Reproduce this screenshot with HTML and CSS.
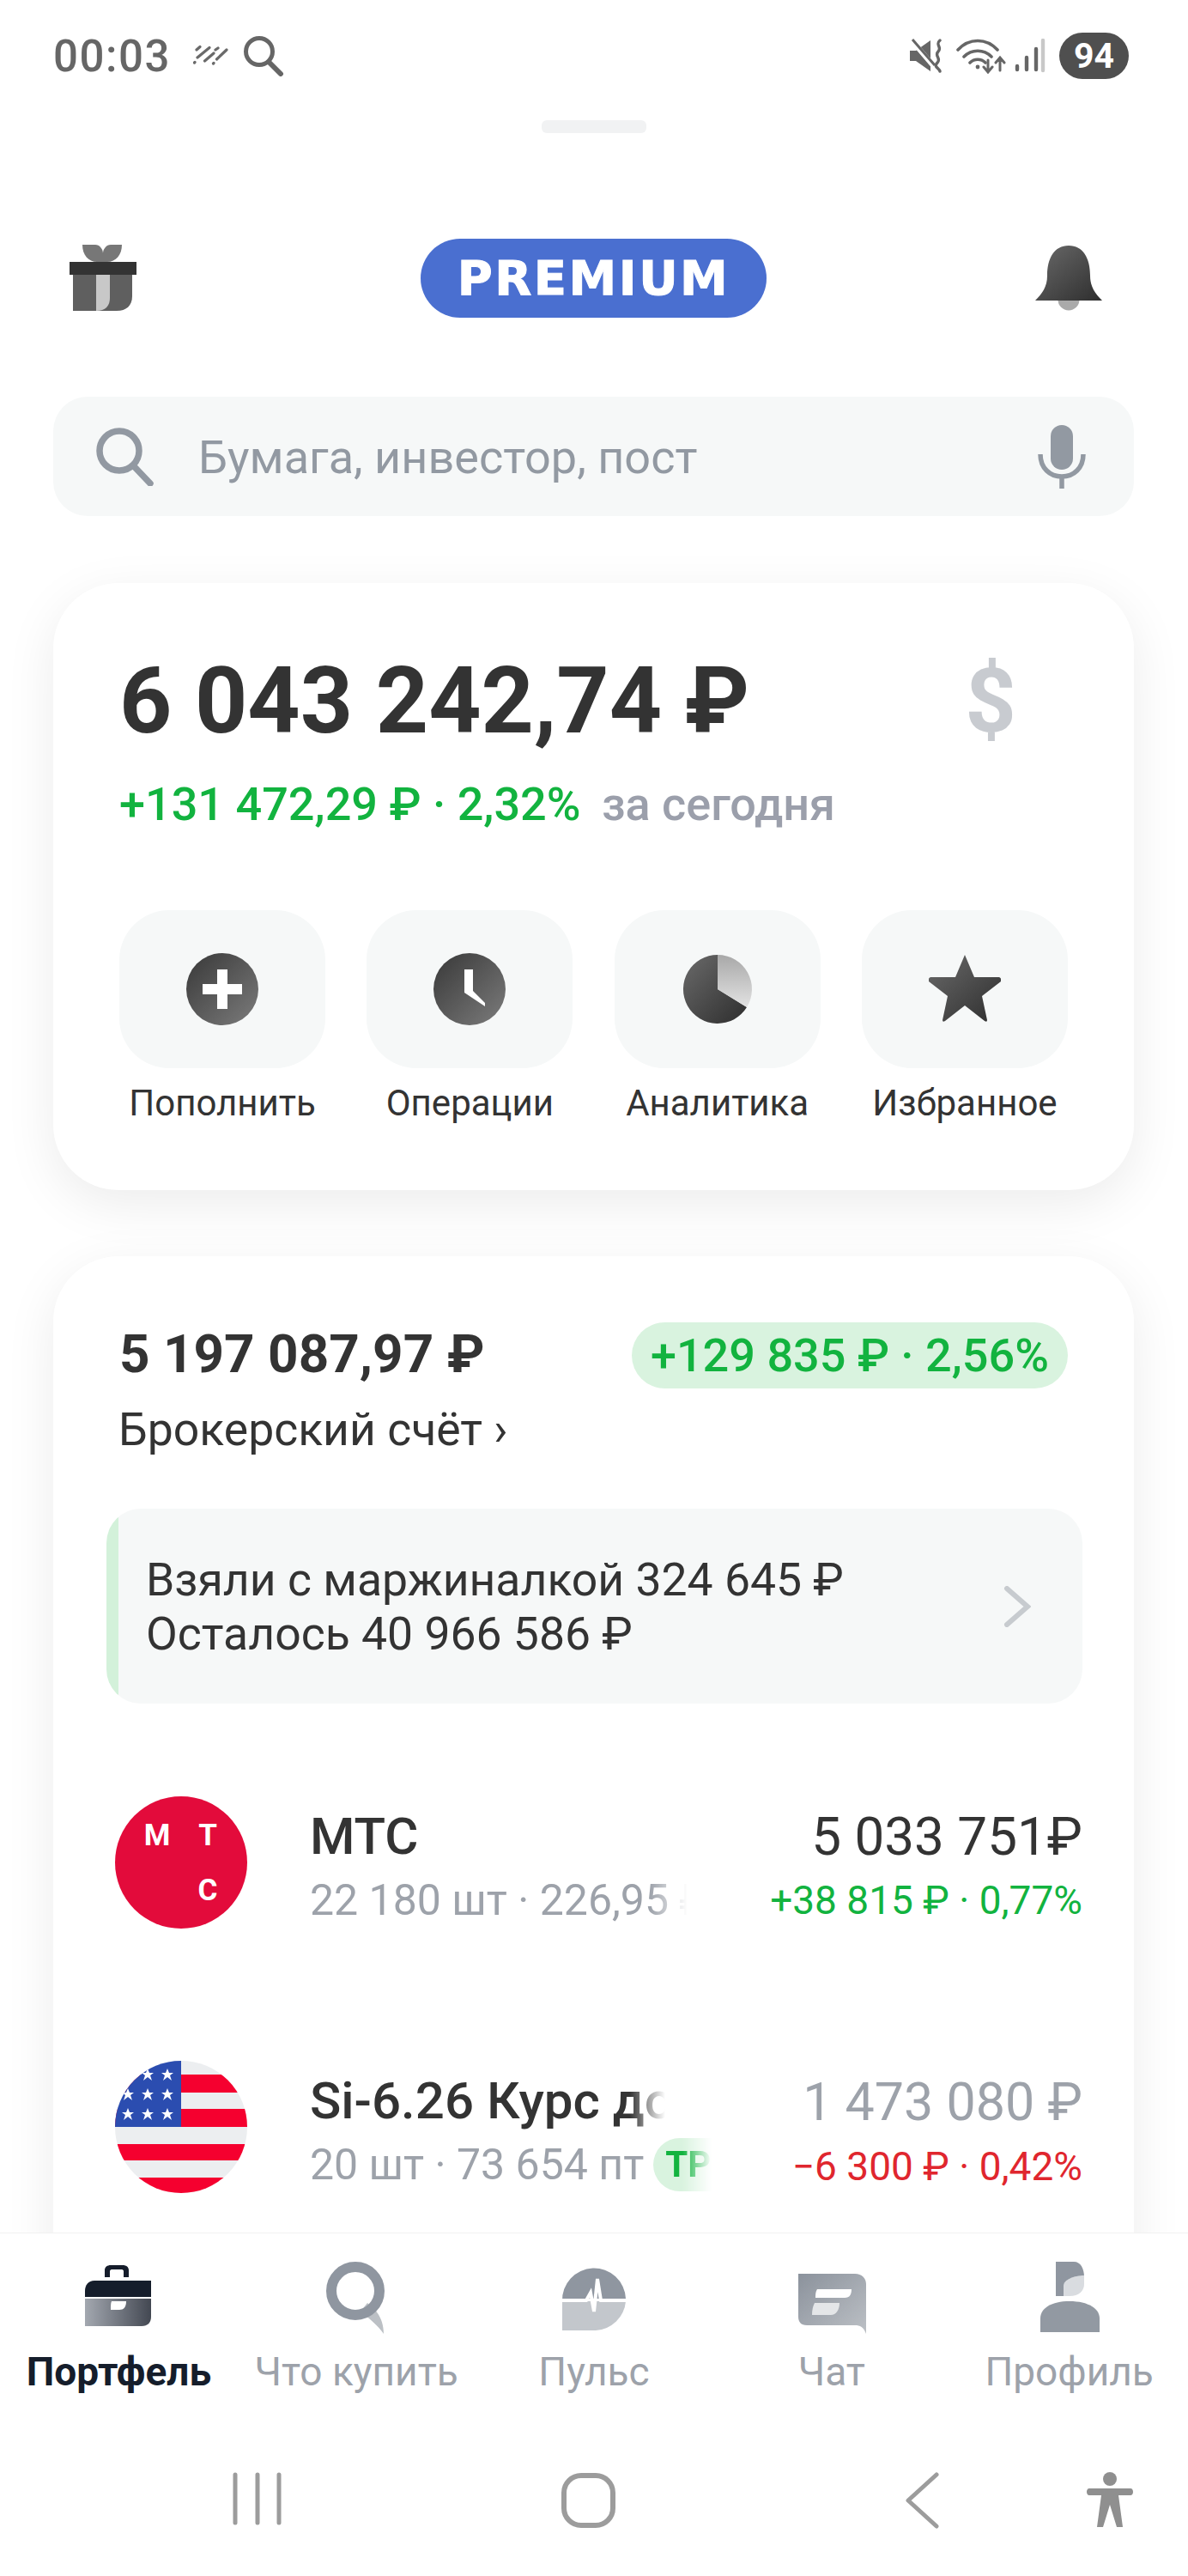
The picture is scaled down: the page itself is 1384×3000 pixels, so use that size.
FILE: index.html
```html
<!DOCTYPE html>
<html lang="ru">
<head>
    <meta charset="UTF-8">
    <meta name="viewport" content="width=device-width, initial-scale=1.0">
    <title>Портфель</title>
    <link rel="stylesheet" href="styles.css">
</head>
<body>
<svg class="defs" width="0" height="0">
    <defs>
        <linearGradient id="dark" x1="0" y1="0" x2="1" y2="1">
            <stop offset="0" stop-color="#383838"/>
            <stop offset="1" stop-color="#7c7c7c"/>
        </linearGradient>
        <linearGradient id="darkRev" x1="0" y1="0" x2="1" y2="1">
            <stop offset="0" stop-color="#6a6a6a"/>
            <stop offset="1" stop-color="#2e2e2e"/>
        </linearGradient>
        <linearGradient id="lightPie" x1="0" y1="0" x2="0" y2="1">
            <stop offset="0" stop-color="#a8a8a8"/>
            <stop offset="1" stop-color="#e2e2e2"/>
        </linearGradient>
        <linearGradient id="case" x1="0" y1="0" x2="1" y2="0">
            <stop offset="0" stop-color="#a3a8b0"/>
            <stop offset="1" stop-color="#434852"/>
        </linearGradient>
        <linearGradient id="chat" x1="0" y1="0" x2="1" y2="1">
            <stop offset="0" stop-color="#8b929c"/>
            <stop offset="1" stop-color="#bcc0c5"/>
        </linearGradient>
    </defs>
</svg>
<div class="screen">
    <div class="status">
        <div class="status-left">
            <span class="time">00:03</span>
            <svg class="ic-rain" width="42" height="26" viewBox="0 0 42 26" fill="none" stroke="#6a6a6a" stroke-width="3.2" stroke-linecap="round">
                <path d="M4 6l4-3.500M5 15L19 3.500M1.500 21l.5-.5M13.500 19L24 10M26 6l3-2M23.500 22l.5-.5M27.500 17L39 6"/>
            </svg>
            <svg width="48" height="48" viewBox="0 0 48 48" fill="none" stroke="#666" stroke-linecap="round">
                <circle cx="19" cy="19" r="15.500" stroke-width="5"/>
                <path d="M30 31l14 14" stroke-width="6"/>
            </svg>
        </div>
        <div class="status-right">
            <svg class="ic-mute" width="40" height="40" viewBox="0 0 40 40" fill="none">
                <path d="M0 14h7L24 2v36L7 26H0z" fill="#666"/>
                <path d="M2 2l24 28" stroke="#fff" stroke-width="6"/>
                <path d="M3 1l26 30" stroke="#666" stroke-width="3"/>
                <path d="M35 2c-6 5 3 8-2 13s4 8-1 13 2 6 3 10" stroke="#666" stroke-width="3.400" stroke-linecap="round"/>
            </svg>
            <svg class="ic-wifi" width="58" height="42" viewBox="0 0 58 42" fill="none" stroke="#666" stroke-width="3.600" stroke-linecap="round">
                <path d="M2 14c13-14 33-14 46 0M9 22c9-9 23-9 32 0M16 29c5-5 13-5 18 0"/>
                <circle cx="25" cy="34" r="2.400" fill="#666" stroke="none"/>
                <path d="M37 26v13m-5-5l5 6 5-6M51 38V24m-5 5l5-6 5 6" stroke-width="3"/>
            </svg>
            <svg class="ic-signal" width="36" height="40" viewBox="0 0 36 40" fill="none" stroke="#666" stroke-width="4.400" stroke-linecap="round">
                <path d="M3 36v-4M14 36V22M25 36V12"/>
                <path d="M33 37V2" stroke="#c8c8c8"/>
            </svg>
            <span class="battery">94</span>
        </div>
    </div>

    <div class="handle"></div>

    <div class="topbar">
        <svg class="gift" width="78" height="78" viewBox="0 0 78 78">
            <path d="M15 0H30C35 0 39 5 39 10C39 5 43 0 48 0H61C61 12 54 20 44 20H32C22 20 15 12 15 0Z" fill="#777"/>
            <path d="M4 35H73V60C73 71 66 77 55 77H4Z" fill="#5f5f5f"/>
            <path d="M31 35H47V62C47 71 42 77 31 77Z" fill="#c8c8c8"/>
            <rect y="20" width="78" height="15" fill="#333"/>
        </svg>
        <div class="premium">PREMIUM</div>
        <svg class="bell" width="78" height="76" viewBox="0 0 78 76">
            <circle cx="39" cy="63" r="12.500" fill="#aaa"/>
            <path d="M39 0C22 0 14 15 14 35C14 48 8 56 0 64H78C70 56 64 48 64 35C64 15 56 0 39 0Z" fill="url(#darkRev)"/>
        </svg>
    </div>

    <div class="search">
        <svg class="search-icon" width="68" height="68" viewBox="0 0 68 68" fill="none" stroke="#9299a2" stroke-width="7.500" stroke-linecap="round">
            <circle cx="28" cy="27" r="23"/>
            <path d="M45 45l19 20"/>
        </svg>
        <span class="search-text">Бумага, инвестор, пост</span>
        <svg class="mic" width="56" height="74" viewBox="0 0 56 74" fill="none" stroke="#9299a2">
            <rect x="15" y="0" width="26" height="52" rx="13" fill="#9299a2" stroke="none"/>
            <path d="M3 34c0 16 11 26 25 26s25-10 25-26" stroke-width="5.500"/>
            <path d="M28 60v14" stroke-width="5.500"/>
        </svg>
    </div>

    <main class="content">
        <section class="card card-total">
            <div class="total-row">
                <span class="total-value">6 043 242,74 ₽</span>
                <span class="currency">$</span>
            </div>
            <div class="today">
                <span class="green">+131 472,29 ₽ · 2,32%</span>
                <span class="today-label">за сегодня</span>
            </div>
            <div class="actions">
                <div class="action">
                    <div class="action-btn">
                        <svg width="84" height="84" viewBox="0 0 84 84">
                            <circle cx="42" cy="42" r="42" fill="url(#dark)"/>
                            <path d="M36 19h12v17h17v12H48v17H36V48H19V36h17z" fill="#fff"/>
                        </svg>
                    </div>
                    <span class="action-label">Пополнить</span>
                </div>
                <div class="action">
                    <div class="action-btn">
                        <svg width="84" height="84" viewBox="0 0 84 84">
                            <circle cx="42" cy="42" r="42" fill="url(#dark)"/>
                            <path d="M36 19h10v25l14 14v4L36 46z" fill="#fff"/>
                        </svg>
                    </div>
                    <span class="action-label">Операции</span>
                </div>
                <div class="action">
                    <div class="action-btn">
                        <svg width="84" height="84" viewBox="0 0 84 84">
                            <path d="M42 2a40 40 0 1 0 34 61L42 42z" fill="url(#darkRev)"/>
                            <path d="M42 2a40 40 0 0 1 34 61L42 42z" fill="url(#lightPie)"/>
                        </svg>
                    </div>
                    <span class="action-label">Аналитика</span>
                </div>
                <div class="action">
                    <div class="action-btn">
                        <svg width="84" height="84" viewBox="0 0 84 84">
                            <path d="M42 2L53 28H82Q85 29 84 33L62 50 68 78Q68 81 65 79L42 61 19 79Q16 81 16 78L22 50 0 33Q-1 29 2 28H31Z" fill="url(#darkRev)"/>
                        </svg>
                    </div>
                    <span class="action-label">Избранное</span>
                </div>
            </div>
        </section>

        <section class="card card-account">
            <div class="account-head">
                <span class="account-value">5 197 087,97 ₽</span>
                <span class="account-pill">+129 835 ₽ · 2,56%</span>
            </div>
            <div class="account-name">Брокерский счёт ›</div>

            <div class="margin-box">
                <div class="margin-text">
                    <div>Взяли с маржиналкой 324 645 ₽</div>
                    <div>Осталось 40 966 586 ₽</div>
                </div>
                <svg width="32" height="48" viewBox="0 0 32 48" fill="none" stroke="#c7cbcf" stroke-width="6" stroke-linecap="round">
                    <path d="M4 3l24 21L4 45"/>
                </svg>
            </div>

            <div class="position">
                <svg class="logo" width="154" height="154" viewBox="0 0 154 154">
                    <circle cx="77" cy="77" r="77" fill="#e30b3b"/>
                    <text class="logo-text" x="49" y="57" text-anchor="middle">М</text>
                    <text class="logo-text" x="108" y="57" text-anchor="middle">Т</text>
                    <text class="logo-text" x="108" y="121" text-anchor="middle">С</text>
                </svg>
                <div class="pos-info">
                    <div class="pos-name">МТС</div>
                    <div class="pos-sub fade">22 180 шт · 226,95 ₽</div>
                </div>
                <div class="pos-right">
                    <div class="pos-sum">5 033 751₽</div>
                    <div class="pos-change green">+38 815 ₽ · 0,77%</div>
                </div>
            </div>

            <div class="position">
                <svg class="logo" width="154" height="154" viewBox="0 0 154 154">
                    <clipPath id="flagClip"><circle cx="77" cy="77" r="77"/></clipPath>
                    <g clip-path="url(#flagClip)">
                        <rect width="154" height="154" fill="#eceef0"/>
                        <path d="M0 16h154v21H0zM0 56h154v21H0zM0 97h154v19H0zM0 136h154v18H0z" fill="#f5002f"/>
                        <rect width="77" height="77" fill="#2b4db0"/>
                        <g fill="#fff">
                            <path id="flagStar" d="M38 9l2 5h5l-4 3 2 6-5-4-5 4 2-6-4-3h5z"/>
                            <use href="#flagStar" x="23"/>
                            <use href="#flagStar" x="-23" y="23"/>
                            <use href="#flagStar" y="23"/>
                            <use href="#flagStar" x="23" y="23"/>
                            <use href="#flagStar" x="-23" y="46"/>
                            <use href="#flagStar" y="46"/>
                            <use href="#flagStar" x="23" y="46"/>
                        </g>
                    </g>
                </svg>
                <div class="pos-info">
                    <div class="pos-name fade-name">Si-6.26 Курс доллара</div>
                    <div class="pos-sub pos-sub-tag">
                        <span>20 шт · 73 654 пт</span>
                        <span class="tag"><span class="tag-inner">TP</span></span>
                    </div>
                </div>
                <div class="pos-right">
                    <div class="pos-sum grey">1 473 080 ₽</div>
                    <div class="pos-change red">−6 300 ₽ · 0,42%</div>
                </div>
            </div>
        </section>
    </main>

    <div class="bottom">
        <nav class="tabs">
            <div class="tab active">
                <svg width="90" height="90" viewBox="0 0 90 90">
                    <path d="M29 22V14C29 10 32 8 36 8H50C54 8 57 10 57 14V22H51V15C51 14 50 13 49 13H37C36 13 35 14 35 15V22Z" fill="#151d2b"/>
                    <path d="M7 45V38C7 31 11 26 18 26H84V45Z" fill="#151d2b" transform="translate(-1 0)"/>
                    <path d="M6 47H83V68C83 75 79 79 72 79H6Z" fill="url(#case)"/>
                    <path d="M37 50H54C54 57 51 60 46 60H36C36 55 36 52 37 50Z" fill="#fff"/>
                </svg>
                <span>Портфель</span>
            </div>
            <div class="tab">
                <svg width="90" height="90" viewBox="0 0 90 90" fill="none">
                    <path d="M58 52C66 58 77 68 77 88C70 78 60 70 50 62Z" fill="#bcc0c5"/>
                    <circle cx="44" cy="38" r="28" stroke="#8f96a0" stroke-width="12"/>
                </svg>
                <span>Что купить</span>
            </div>
            <div class="tab">
                <svg width="90" height="90" viewBox="0 0 90 90">
                    <path d="M8 50A37 37 0 0 1 82 47H8Z" fill="#8f96a0"/>
                    <path d="M8 50H82A37 37 0 0 1 47 84H8Z" fill="#c3c7cc"/>
                    <path d="M5 49H36L41 40 45 62 49 24 53 49H85" fill="none" stroke="#fff" stroke-width="4"/>
                </svg>
                <span>Пульс</span>
            </div>
            <div class="tab">
                <svg width="90" height="90" viewBox="0 0 90 90">
                    <path d="M6 18H72C80 18 85 23 85 30V88C82 80 78 78 72 78H16C9 78 6 74 6 68Z" fill="url(#chat)"/>
                    <path d="M28 36H68C68 42 66 46 60 46H26C26 42 26 39 28 36Z" fill="#fff"/>
                    <path d="M25 52H54C54 60 50 66 44 66H22C22 60 23 56 25 52Z" fill="#e4e6e8"/>
                </svg>
                <span>Чат</span>
            </div>
            <div class="tab">
                <svg width="90" height="90" viewBox="0 0 90 90">
                    <path d="M29 4H50C58 4 62 12 62 22C50 22 44 28 44 44H29Z" fill="#8f96a0"/>
                    <path d="M62 20V30C62 38 56 44 45 44H38V32C38 25 50 20 62 20Z" fill="#d9dce0"/>
                    <path d="M11 86V70C11 58 24 50 45 50S80 58 80 70V86Z" fill="#9299a2"/>
                </svg>
                <span>Профиль</span>
            </div>
        </nav>
        <div class="navbar">
            <svg width="60" height="62" viewBox="0 0 60 62" fill="none" stroke="#9c9c9c" stroke-width="5" stroke-linecap="round">
                <path d="M4 3v56M30 3v56M55 3v56"/>
            </svg>
            <svg width="68" height="66" viewBox="0 0 68 66" fill="none" stroke="#9c9c9c" stroke-width="6">
                <rect x="5" y="4" width="57" height="58" rx="20"/>
            </svg>
            <svg width="46" height="66" viewBox="0 0 46 66" fill="none" stroke="#9c9c9c" stroke-width="5" stroke-linecap="round" stroke-linejoin="round">
                <path d="M41 3L8 33l33 30"/>
            </svg>
            <svg width="60" height="66" viewBox="0 0 60 66" fill="#8f8f8f">
                <circle cx="30" cy="8" r="8"/>
                <path d="M6 19H54C58 19 58 27 54 27H40L45 64H38L30 38 22 64H15L20 27H6C2 27 2 19 6 19Z"/>
            </svg>
        </div>
    </div>
</div>
</body>
</html>
```

FILE: styles.css
```css
html, body {
    margin: 0;
    padding: 0;
    background-color: #ffffff;
}
body {
    font-family: Roboto, "Noto Sans", sans-serif;
    color: #333333;
}
.defs {
    display: block;
    height: 0;
}
.screen {
    width: 1384px;
    height: 3000px;
    display: flex;
    flex-direction: column;
    overflow: hidden;
}

/* status bar */
.status {
    height: 130px;
    flex: none;
    display: flex;
    justify-content: space-between;
    align-items: center;
    padding: 0 69px 0 62px;
}
.status-left, .status-right {
    display: flex;
    align-items: center;
}
.time {
    font-size: 51px;
    font-weight: 500;
    letter-spacing: 1.5px;
    color: #666666;
    margin-right: 26px;
}
.ic-rain {
    margin-right: 16px;
}
.ic-mute {
    margin-right: 14px;
}
.ic-wifi {
    margin-right: 10px;
}
.ic-signal {
    margin-right: 16px;
}
.battery {
    width: 81px;
    height: 54px;
    border-radius: 27px;
    background-color: #4f4f4f;
    color: #ffffff;
    font-size: 41px;
    font-weight: 700;
    line-height: 54px;
    text-align: center;
}

.handle {
    flex: none;
    width: 122px;
    height: 15px;
    margin: 10px auto 0;
    border-radius: 6px;
    background-color: #f1f2f3;
}

/* top bar */
.topbar {
    flex: none;
    height: 92px;
    margin-top: 123px;
    padding: 0 100px 0 81px;
    display: grid;
    grid-template-columns: 1fr auto 1fr;
    align-items: center;
}
.bell {
    justify-self: end;
}
.premium {
    width: 403px;
    height: 92px;
    margin-left: 18px;
    border-radius: 46px;
    background-color: #4a6fd0;
    color: #ffffff;
    font-family: "DejaVu Sans", sans-serif;
    font-size: 56px;
    font-weight: 700;
    letter-spacing: 2.5px;
    -webkit-text-stroke: 1px #ffffff;
    line-height: 92px;
    text-align: center;
}

.search {
    flex: none;
    height: 139px;
    margin: 92px 63px 0 62px;
    padding: 0 56px 0 49px;
    display: flex;
    align-items: center;
    border-radius: 40px;
    background-color: #f6f8f8;
}
.search-text {
    margin-left: 52px;
    flex: 1;
    font-size: 54px;
    line-height: 66px;
    padding-top: 2px;
    color: #9299a2;
}

/* cards */
.content {
    flex: 1;
    min-height: 0;
    margin-top: 78px;
    padding: 0 63px 0 62px;
}
.card {
    background-color: #ffffff;
    border-radius: 76px;
    box-shadow: 0 16px 60px rgba(0, 0, 0, 0.08);
}
.card-total {
    height: 707px;
    box-sizing: border-box;
    padding: 78px 77px 0;
}
.total-row {
    display: flex;
    justify-content: space-between;
    height: 120px;
    line-height: 120px;
}
.total-value {
    font-size: 107px;
    font-weight: 700;
    color: #333333;
}
.currency {
    margin-right: 60px;
    font-size: 104px;
    font-weight: 700;
    color: #c8cbd0;
}
.today {
    margin-top: 30px;
    line-height: 60px;
    font-size: 54px;
    font-weight: 500;
}
.green {
    color: #12b33f;
}
.today-label {
    margin-left: 11px;
    color: #9b9fab;
}
.actions {
    margin-top: 93px;
    display: grid;
    grid-template-columns: repeat(4, 240px);
    justify-content: space-between;
}
.action {
    display: flex;
    flex-direction: column;
    align-items: center;
}
.action-btn {
    width: 240px;
    height: 184px;
    border-radius: 58px;
    background-color: #f6f8f8;
    display: flex;
    align-items: center;
    justify-content: center;
}
.action-label {
    margin-top: 16px;
    font-size: 42px;
    line-height: 50px;
    white-space: nowrap;
}

.card-account {
    margin-top: 77px;
    padding: 77px 62px 0;
    height: 1300px;
}
.account-head {
    display: flex;
    justify-content: space-between;
    align-items: center;
    padding: 0 15px;
    height: 77px;
}
.account-value {
    font-size: 62px;
    font-weight: 700;
    line-height: 70px;
    margin-bottom: 4px;
}
.account-pill {
    height: 77px;
    padding: 0 22px;
    border-radius: 39px;
    background-color: #d9f3df;
    color: #12b33f;
    font-size: 54px;
    font-weight: 500;
    line-height: 77px;
}
.account-name {
    margin-top: 18px;
    padding-left: 14px;
    font-size: 53.5px;
    line-height: 60px;
}
.margin-box {
    margin-top: 62px;
    height: 227px;
    box-sizing: border-box;
    padding: 0 60px 0 46px;
    display: flex;
    align-items: center;
    justify-content: space-between;
    border-radius: 40px;
    background: linear-gradient(to right, #d3f1da 14px, #f6f8f8 14px);
    width: 1137px;
}
.margin-text {
    font-size: 53.5px;
    line-height: 63px;
}

/* positions */
.position {
    width: 1127px;
    margin: 108px 0 0 10px;
    display: flex;
}
.position + .position {
    margin-top: 150px;
}
.logo {
    flex: none;
}
.logo-text {
    font-size: 35px;
    font-weight: 700;
    fill: #ffffff;
}
.pos-info {
    width: 440px;
    margin-left: 73px;
    padding-top: 12px;
}
.pos-name {
    font-size: 60px;
    font-weight: 500;
    line-height: 70px;
    white-space: nowrap;
    overflow: hidden;
}
.pos-sub {
    margin-top: 2px;
    font-size: 50px;
    line-height: 74px;
    color: #9da2aa;
    white-space: nowrap;
    overflow: hidden;
}
.fade {
    -webkit-mask-image: linear-gradient(to right, #000 90%, transparent);
    mask-image: linear-gradient(to right, #000 90%, transparent);
}
.fade-name {
    width: 414px;
    -webkit-mask-image: linear-gradient(to right, #000 90%, transparent);
    mask-image: linear-gradient(to right, #000 90%, transparent);
}
.pos-sub-tag {
    display: flex;
    align-items: center;
    width: 470px;
}
.tag {
    flex: none;
    width: 68px;
    height: 62px;
    margin-left: 11px;
    overflow: hidden;
    -webkit-mask-image: linear-gradient(to right, #000 50%, transparent);
    mask-image: linear-gradient(to right, #000 50%, transparent);
}
.tag-inner {
    display: block;
    width: 120px;
    height: 62px;
    padding-left: 14px;
    border-radius: 31px;
    background-color: #d9f3df;
    color: #12b33f;
    font-size: 42px;
    font-weight: 700;
    line-height: 62px;
}
.pos-right {
    margin-left: auto;
    padding-top: 12px;
    text-align: right;
    white-space: nowrap;
}
.pos-sum {
    font-size: 62px;
    line-height: 70px;
}
.pos-sum.grey {
    font-size: 61px;
    line-height: 72px;
}
.pos-change {
    margin-top: 2px;
    font-size: 46px;
    line-height: 74px;
}
.grey {
    color: #9da2aa;
}
.red {
    color: #e0262e;
}

/* bottom */
.bottom {
    flex: none;
    height: 400px;
    position: relative;
    box-sizing: border-box;
    border-top: 1px solid #f1f1f1;
    background-color: #ffffff;
}
.tabs {
    padding-top: 29px;
    display: grid;
    grid-template-columns: repeat(5, 1fr);
}
.tab {
    display: flex;
    flex-direction: column;
    align-items: center;
    font-size: 46px;
    line-height: 50px;
    color: #9da2aa;
    white-space: nowrap;
}
.tab span {
    margin-top: 17px;
}
.tab.active {
    color: #151d2b;
    font-weight: 700;
}
.navbar {
    margin-top: 92px;
    padding-left: 270px;
    display: grid;
    grid-template-columns: 382px 398px 213px 60px;
}
```
